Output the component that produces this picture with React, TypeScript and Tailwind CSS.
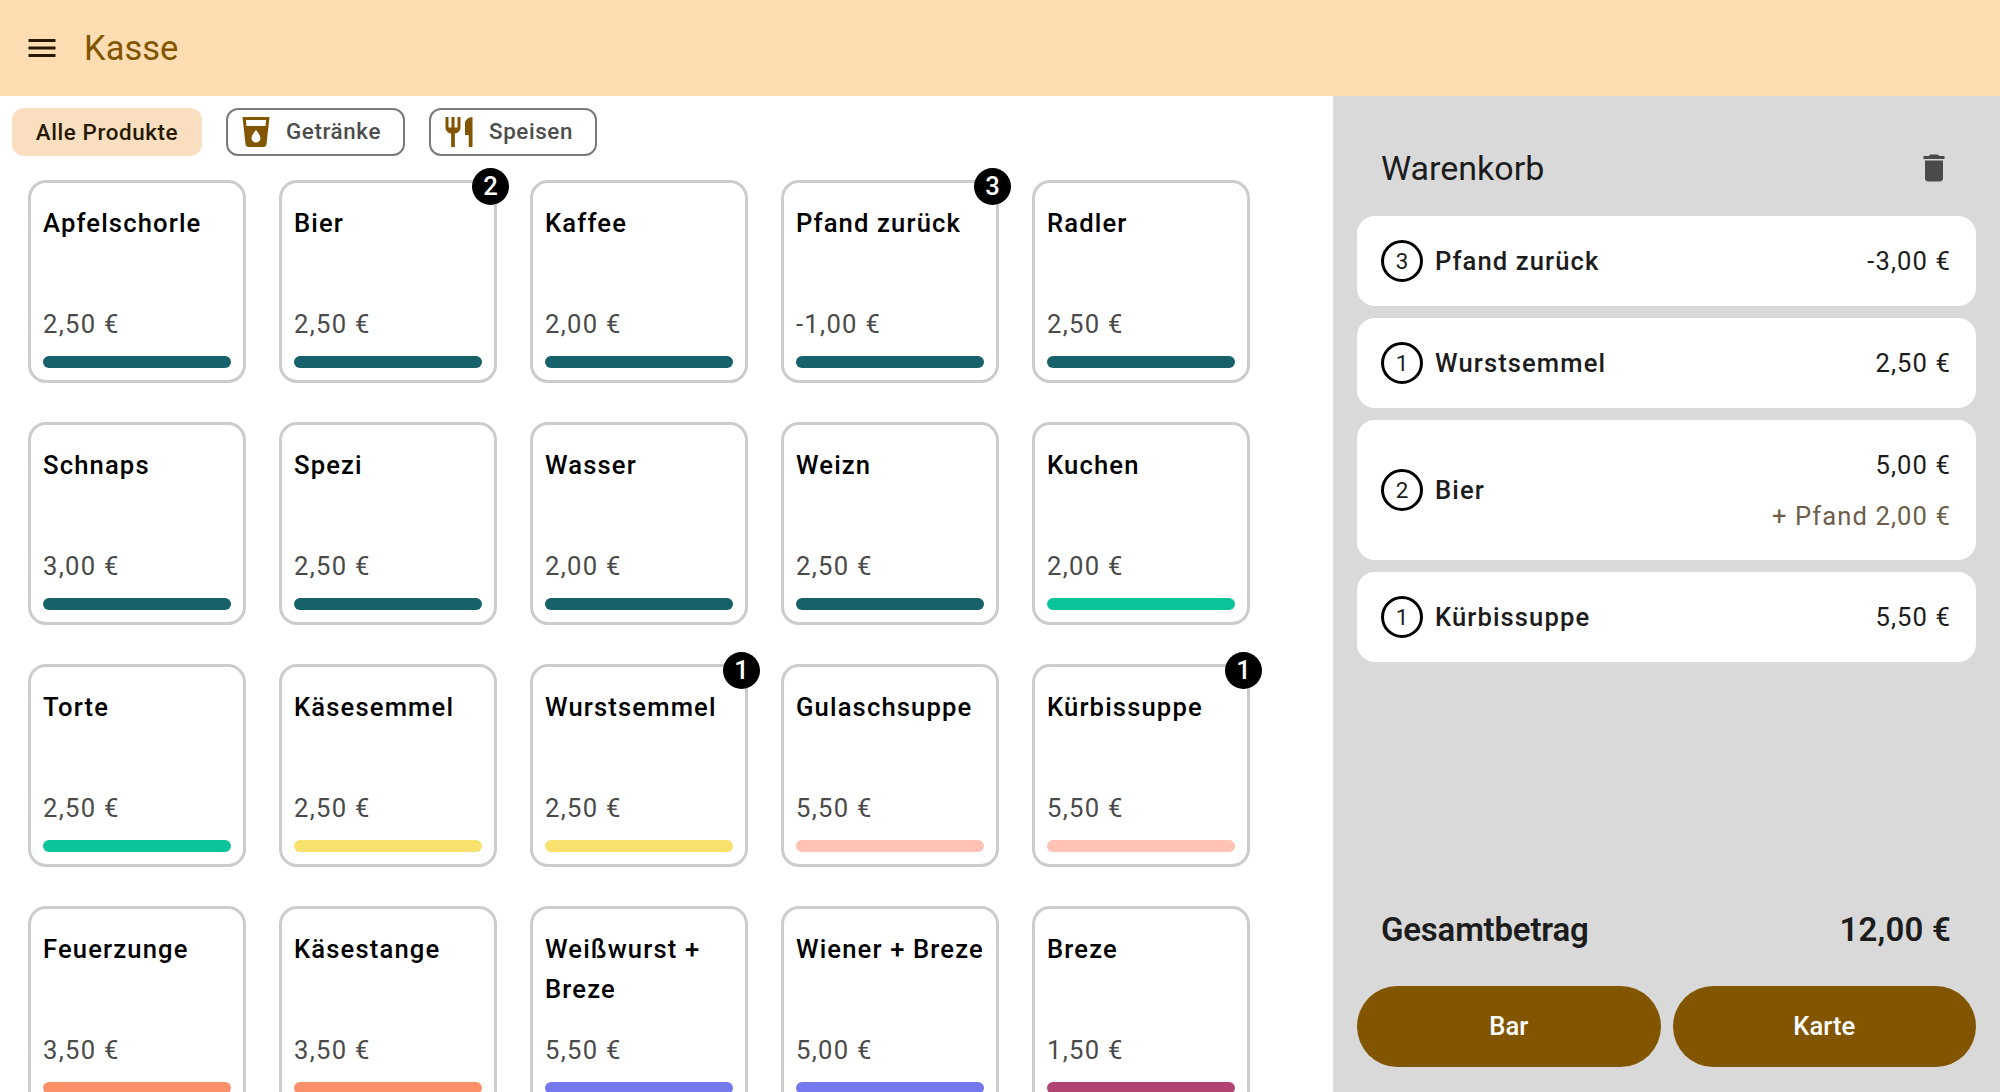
import React from "react";

type P = { name: string; price: string; bar: string; badge?: number };

const products: P[] = [
  { name: "Apfelschorle", price: "2,50 €", bar: "bg-[#17616a]" },
  { name: "Bier", price: "2,50 €", bar: "bg-[#17616a]", badge: 2 },
  { name: "Kaffee", price: "2,00 €", bar: "bg-[#17616a]" },
  { name: "Pfand zurück", price: "-1,00 €", bar: "bg-[#17616a]", badge: 3 },
  { name: "Radler", price: "2,50 €", bar: "bg-[#17616a]" },
  { name: "Schnaps", price: "3,00 €", bar: "bg-[#17616a]" },
  { name: "Spezi", price: "2,50 €", bar: "bg-[#17616a]" },
  { name: "Wasser", price: "2,00 €", bar: "bg-[#17616a]" },
  { name: "Weizn", price: "2,50 €", bar: "bg-[#17616a]" },
  { name: "Kuchen", price: "2,00 €", bar: "bg-[#0cc49a]" },
  { name: "Torte", price: "2,50 €", bar: "bg-[#0cc49a]" },
  { name: "Käsesemmel", price: "2,50 €", bar: "bg-[#f8e16c]" },
  { name: "Wurstsemmel", price: "2,50 €", bar: "bg-[#f8e16c]", badge: 1 },
  { name: "Gulaschsuppe", price: "5,50 €", bar: "bg-[#ffc2b4]" },
  { name: "Kürbissuppe", price: "5,50 €", bar: "bg-[#ffc2b4]", badge: 1 },
  { name: "Feuerzunge", price: "3,50 €", bar: "bg-[#fb8f67]" },
  { name: "Käsestange", price: "3,50 €", bar: "bg-[#fb8f67]" },
  { name: "Weißwurst + Breze", price: "5,50 €", bar: "bg-[#7678ed]" },
  { name: "Wiener + Breze", price: "5,00 €", bar: "bg-[#7678ed]" },
  { name: "Breze", price: "1,50 €", bar: "bg-[#b14472]" },
];

function Card({ p }: { p: P }) {
  return (
    <div className="relative h-[203px] w-[218px] shrink-0 rounded-[18px] border-[3px] border-[#cccccc] bg-white p-[12px]">
      <div className="flex h-full flex-col">
        <div className="mt-[8px] h-[84px] text-[25.6px] leading-[40px] font-medium tracking-[1.15px] text-black">{p.name}</div>
        <div className="mt-auto text-[25.6px] leading-[36px] tracking-[1.3px] text-[#4a4a4a]">{p.price}</div>
        <div className={`mt-[14px] h-[12px] shrink-0 rounded-[6px] ${p.bar}`} />
      </div>
      {p.badge ? (
        <div className="absolute -top-[15px] -right-[15px] flex h-[37px] w-[37px] items-center justify-center rounded-full bg-black text-[25.6px] leading-none font-medium text-white">
          {p.badge}
        </div>
      ) : null}
    </div>
  );
}

function CartRow({ qty, name, amount, extra }: { qty: number; name: string; amount: string; extra?: string }) {
  return (
    <div className={`flex items-center justify-between rounded-[18px] bg-white pr-[25px] pl-[24px] ${extra ? "h-[140px]" : "h-[90px]"}`}>
      <div className="flex items-center gap-[12px]">
        <div className="flex h-[42px] w-[42px] items-center justify-center rounded-full border-[3px] border-black text-[22.4px] leading-none text-[#1c1c1c]">
          {qty}
        </div>
        <div className="text-[25.6px] font-medium tracking-[1.1px] text-[#1c1c1c]">{name}</div>
      </div>
      <div className="flex flex-col items-end gap-[15px] text-[25.6px] leading-[36px] tracking-[1.1px] text-[#1c1c1c]">
        <div>{amount}</div>
        {extra ? <div className="text-[#6d5e4a]">{extra}</div> : null}
      </div>
    </div>
  );
}

export default function App() {
  return (
    <div className="flex h-[1092px] w-[2000px] flex-col overflow-hidden bg-white font-['Roboto',sans-serif]">
      <header className="flex h-[96px] shrink-0 items-center bg-[#ffddb3] pl-[24px]">
        <svg width="36" height="36" viewBox="0 0 24 24" fill="#271900">
          <path d="M3 18h18v-2H3v2zm0-5h18v-2H3v2zm0-7v2h18V6H3z" />
        </svg>
        <div className="ml-[24px] text-[34.5px] leading-none text-[#825500]">Kasse</div>
      </header>
      <div className="flex min-h-0 flex-1">
        <main className="w-[1333px] shrink-0 overflow-hidden">
          <div className="flex gap-[24px] pt-[12px] pl-[12px]">
            <div className="flex h-[48px] w-[190px] items-center justify-center rounded-[12px] bg-[#f9dfc0] pt-[1px] text-[22.4px] font-medium tracking-[0.6px] text-[#271900]">
              Alle Produkte
            </div>
            <div className="flex h-[48px] w-[179px] items-center rounded-[12px] border-2 border-[#7a7a7a] pl-[10px] text-[22.4px] font-medium tracking-[0.6px] text-[#4d4d4d]">
              <svg width="36" height="36" viewBox="0 0 24 24" fill="#825500">
                <path d="M3 2l2.01 18.23C5.13 21.23 5.97 22 7 22h10c1.03 0 1.87-.77 1.99-1.77L21 2H3zm9 17c-1.66 0-3-1.34-3-3 0-2 3-5.4 3-5.4s3 3.4 3 5.4c0 1.66-1.34 3-3 3zm6.33-11H5.67l-.44-4h13.53l-.43 4z" />
              </svg>
              <span className="ml-[12px]">Getränke</span>
            </div>
            <div className="flex h-[48px] w-[168px] items-center rounded-[12px] border-2 border-[#7a7a7a] pl-[10px] text-[22.4px] font-medium tracking-[0.6px] text-[#4d4d4d]">
              <svg width="36" height="36" viewBox="0 0 24 24" fill="#825500">
                <path d="M11 9H9V2H7v7H5V2H3v7c0 2.12 1.66 3.84 3.75 3.97V22h2.5v-9.03C11.34 12.84 13 11.12 13 9V2h-2v7zm5-3v8h2.5v8H21V2c-2.76 0-5 2.24-5 4z" />
              </svg>
              <span className="ml-[12px]">Speisen</span>
            </div>
          </div>
          <div className="mt-[24px] grid grid-cols-[repeat(5,218px)] gap-x-[33px] gap-y-[39px] pl-[28px]">
            {products.map((p) => (
              <Card key={p.name} p={p} />
            ))}
          </div>
        </main>
        <aside className="flex min-w-0 flex-1 flex-col bg-[#d9d9d9] px-[24px]">
          <div className="flex h-[120px] shrink-0 items-center justify-between pt-[24px] pr-[24px] pl-[24px]">
            <div className="text-[34px] leading-none text-[#1c1c1c]">Warenkorb</div>
            <svg width="36" height="36" viewBox="0 0 24 24" fill="#4a4a4a">
              <path d="M6 19c0 1.1.9 2 2 2h8c1.1 0 2-.9 2-2V7H6v12zM19 4h-3.5l-1-1h-5l-1 1H5v2h14V4z" />
            </svg>
          </div>
          <div className="flex flex-col gap-[12px]">
            <CartRow qty={3} name="Pfand zurück" amount="-3,00 €" />
            <CartRow qty={1} name="Wurstsemmel" amount="2,50 €" />
            <CartRow qty={2} name="Bier" amount="5,00 €" extra="+ Pfand 2,00 €" />
            <CartRow qty={1} name="Kürbissuppe" amount="5,50 €" />
          </div>
          <div className="mt-auto flex items-center justify-between pr-[25px] pl-[24px] text-[33px] leading-[48px] font-semibold text-[#1c1c1c]">
            <div className="tracking-[-0.2px]">Gesamtbetrag</div>
            <div className="tracking-[0.2px]">12,00 €</div>
          </div>
          <div className="mt-[32px] mb-[25px] flex gap-[12px]">
            <div className="flex h-[81px] flex-1 items-center justify-center rounded-full bg-[#825500] text-[25.6px] font-medium text-white">Bar</div>
            <div className="flex h-[81px] flex-1 items-center justify-center rounded-full bg-[#825500] text-[25.6px] font-medium text-white">Karte</div>
          </div>
        </aside>
      </div>
    </div>
  );
}
